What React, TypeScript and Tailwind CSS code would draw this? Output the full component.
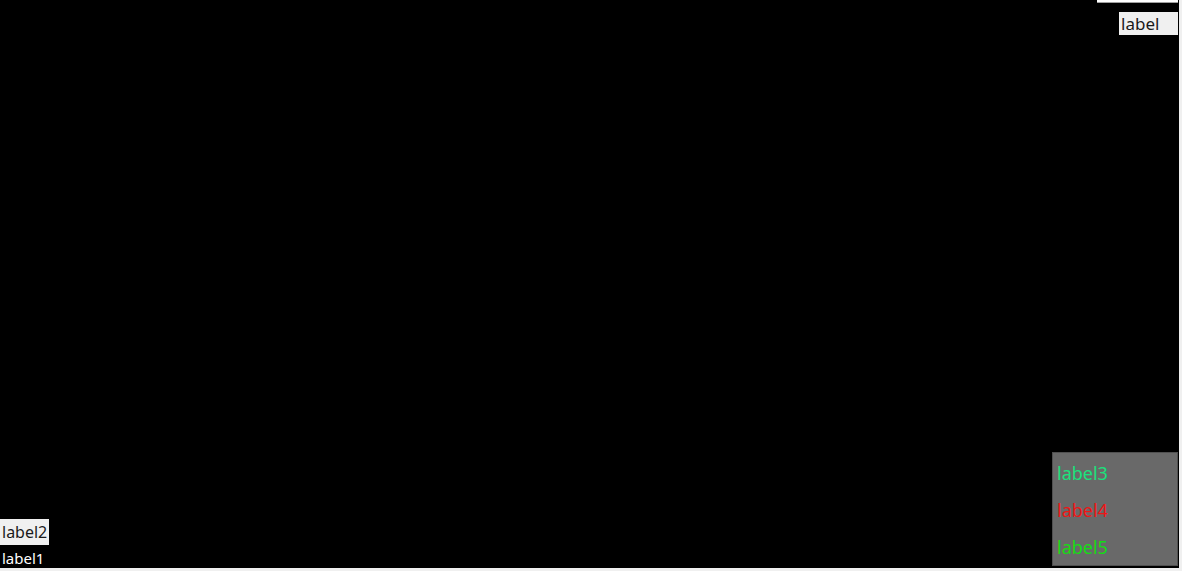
export default function App() {
  const font = { fontFamily: '"Noto Sans", "Liberation Sans", sans-serif' };
  return (
    <div className="w-[1182px] h-[571px] bg-[#f0f0f0] overflow-hidden" style={font}>
      <div className="w-[1179px] h-[568px] bg-black flex flex-col justify-between">
        {/* top right */}
        <div className="flex flex-col items-end">
          <div className="w-[81px] h-[3px] bg-white border-b border-[#a0a0a0] mr-[1px]" />
          <div className="mt-[9px] mr-[1px] w-[59px] h-[23px] bg-[#f0f0f0] text-[#1a1a1a] text-[17px] leading-[23px] pl-[2px]">
            label
          </div>
        </div>

        {/* bottom row */}
        <div className="flex justify-between items-end">
          <div className="flex flex-col">
            <div className="w-[49px] h-[26px] bg-[#f0f0f0] text-[#1a1a1a] text-[16px] leading-[26px] pl-[2px]">
              label2
            </div>
            <div className="mt-[4px] h-[19px] text-white text-[15px] leading-[19px] pl-[2px]">
              label1
            </div>
          </div>
          <div className="mb-[2px] mr-[1px] w-[126px] h-[114px] bg-[#696969] border border-[#505050] flex flex-col justify-around pl-[4px] pt-[2px] text-[18px] leading-[24px]">
            <div className="text-[#19e27c]">label3</div>
            <div className="text-[#ee1616]">label4</div>
            <div className="text-[#14dc14]">label5</div>
          </div>
        </div>
      </div>
    </div>
  );
}
